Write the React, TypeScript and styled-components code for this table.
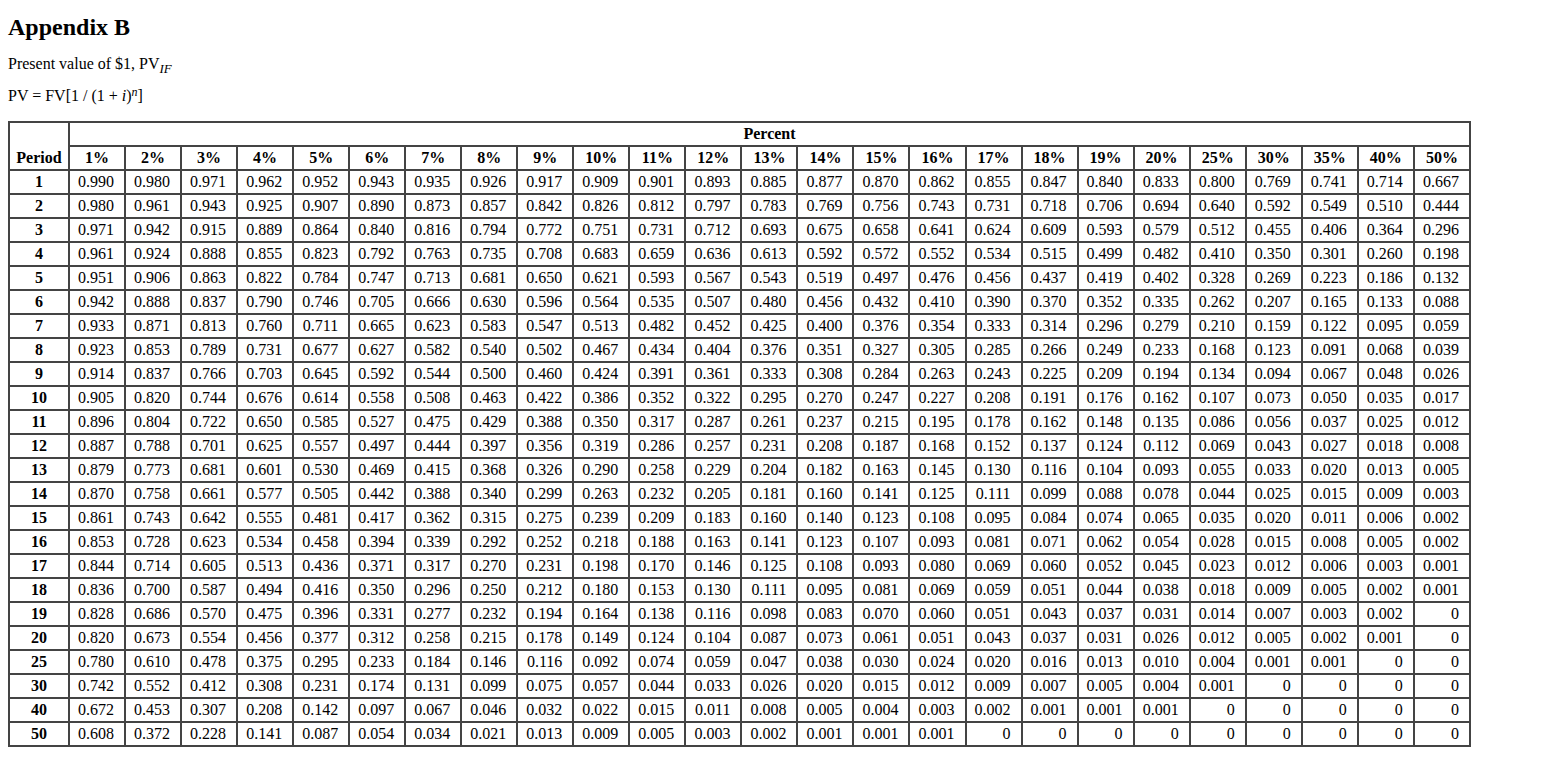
import styled, { createGlobalStyle } from 'styled-components';

const GlobalStyle = createGlobalStyle`
  html, body {
    margin: 0;
    padding: 0;
    background: #fff;
  }

  body {
    font-family: "Liberation Serif", "Times New Roman", serif;
    color: #000;
  }
`;

const Page = styled.main`
  padding: 8px;
`;

const Title = styled.h2`
  margin: 5px 0 0;
  font-size: 24px;
  line-height: 28px;
  font-weight: bold;
`;

const Line = styled.p`
  margin: 14px 0 0;
  font-size: 16px;
  line-height: 18px;
`;

const Sub = styled.sub`
  font-style: italic;
  font-size: 13px;
  line-height: 0;
  vertical-align: -4px;
`;

const Sup = styled.sup`
  font-style: italic;
  font-size: 12px;
  line-height: 0;
  vertical-align: 5px;
`;

const Table = styled.table`
  margin-top: 16px;
  width: 1463px;
  table-layout: fixed;
  border-collapse: separate;
  border-spacing: 0;
  border: 1px solid #444;
  font-size: 16px;
  line-height: 20px;

  th,
  td {
    border: 1px solid #444;
    padding: 1px 10px 1px 4px;
  }

  th {
    font-weight: bold;
    text-align: center;
    padding: 1px 2px;
  }

  td {
    text-align: right;
  }
`;

const PeriodHead = styled.th`
  width: 60px;
  vertical-align: bottom;
  box-sizing: border-box;
`;

const PeriodCell = styled.td`
  && {
    font-weight: bold;
    text-align: center;
    padding: 1px 2px;
  }
`;

const rates = [
  '1%', '2%', '3%', '4%', '5%', '6%', '7%', '8%', '9%', '10%',
  '11%', '12%', '13%', '14%', '15%', '16%', '17%', '18%', '19%', '20%',
  '25%', '30%', '35%', '40%', '50%'
];

// Present value factors, one row per period
const rows: [string, string][] = [
  ['1', '0.990 0.980 0.971 0.962 0.952 0.943 0.935 0.926 0.917 0.909 0.901 0.893 0.885 0.877 0.870 0.862 0.855 0.847 0.840 0.833 0.800 0.769 0.741 0.714 0.667'],
  ['2', '0.980 0.961 0.943 0.925 0.907 0.890 0.873 0.857 0.842 0.826 0.812 0.797 0.783 0.769 0.756 0.743 0.731 0.718 0.706 0.694 0.640 0.592 0.549 0.510 0.444'],
  ['3', '0.971 0.942 0.915 0.889 0.864 0.840 0.816 0.794 0.772 0.751 0.731 0.712 0.693 0.675 0.658 0.641 0.624 0.609 0.593 0.579 0.512 0.455 0.406 0.364 0.296'],
  ['4', '0.961 0.924 0.888 0.855 0.823 0.792 0.763 0.735 0.708 0.683 0.659 0.636 0.613 0.592 0.572 0.552 0.534 0.515 0.499 0.482 0.410 0.350 0.301 0.260 0.198'],
  ['5', '0.951 0.906 0.863 0.822 0.784 0.747 0.713 0.681 0.650 0.621 0.593 0.567 0.543 0.519 0.497 0.476 0.456 0.437 0.419 0.402 0.328 0.269 0.223 0.186 0.132'],
  ['6', '0.942 0.888 0.837 0.790 0.746 0.705 0.666 0.630 0.596 0.564 0.535 0.507 0.480 0.456 0.432 0.410 0.390 0.370 0.352 0.335 0.262 0.207 0.165 0.133 0.088'],
  ['7', '0.933 0.871 0.813 0.760 0.711 0.665 0.623 0.583 0.547 0.513 0.482 0.452 0.425 0.400 0.376 0.354 0.333 0.314 0.296 0.279 0.210 0.159 0.122 0.095 0.059'],
  ['8', '0.923 0.853 0.789 0.731 0.677 0.627 0.582 0.540 0.502 0.467 0.434 0.404 0.376 0.351 0.327 0.305 0.285 0.266 0.249 0.233 0.168 0.123 0.091 0.068 0.039'],
  ['9', '0.914 0.837 0.766 0.703 0.645 0.592 0.544 0.500 0.460 0.424 0.391 0.361 0.333 0.308 0.284 0.263 0.243 0.225 0.209 0.194 0.134 0.094 0.067 0.048 0.026'],
  ['10', '0.905 0.820 0.744 0.676 0.614 0.558 0.508 0.463 0.422 0.386 0.352 0.322 0.295 0.270 0.247 0.227 0.208 0.191 0.176 0.162 0.107 0.073 0.050 0.035 0.017'],
  ['11', '0.896 0.804 0.722 0.650 0.585 0.527 0.475 0.429 0.388 0.350 0.317 0.287 0.261 0.237 0.215 0.195 0.178 0.162 0.148 0.135 0.086 0.056 0.037 0.025 0.012'],
  ['12', '0.887 0.788 0.701 0.625 0.557 0.497 0.444 0.397 0.356 0.319 0.286 0.257 0.231 0.208 0.187 0.168 0.152 0.137 0.124 0.112 0.069 0.043 0.027 0.018 0.008'],
  ['13', '0.879 0.773 0.681 0.601 0.530 0.469 0.415 0.368 0.326 0.290 0.258 0.229 0.204 0.182 0.163 0.145 0.130 0.116 0.104 0.093 0.055 0.033 0.020 0.013 0.005'],
  ['14', '0.870 0.758 0.661 0.577 0.505 0.442 0.388 0.340 0.299 0.263 0.232 0.205 0.181 0.160 0.141 0.125 0.111 0.099 0.088 0.078 0.044 0.025 0.015 0.009 0.003'],
  ['15', '0.861 0.743 0.642 0.555 0.481 0.417 0.362 0.315 0.275 0.239 0.209 0.183 0.160 0.140 0.123 0.108 0.095 0.084 0.074 0.065 0.035 0.020 0.011 0.006 0.002'],
  ['16', '0.853 0.728 0.623 0.534 0.458 0.394 0.339 0.292 0.252 0.218 0.188 0.163 0.141 0.123 0.107 0.093 0.081 0.071 0.062 0.054 0.028 0.015 0.008 0.005 0.002'],
  ['17', '0.844 0.714 0.605 0.513 0.436 0.371 0.317 0.270 0.231 0.198 0.170 0.146 0.125 0.108 0.093 0.080 0.069 0.060 0.052 0.045 0.023 0.012 0.006 0.003 0.001'],
  ['18', '0.836 0.700 0.587 0.494 0.416 0.350 0.296 0.250 0.212 0.180 0.153 0.130 0.111 0.095 0.081 0.069 0.059 0.051 0.044 0.038 0.018 0.009 0.005 0.002 0.001'],
  ['19', '0.828 0.686 0.570 0.475 0.396 0.331 0.277 0.232 0.194 0.164 0.138 0.116 0.098 0.083 0.070 0.060 0.051 0.043 0.037 0.031 0.014 0.007 0.003 0.002 0'],
  ['20', '0.820 0.673 0.554 0.456 0.377 0.312 0.258 0.215 0.178 0.149 0.124 0.104 0.087 0.073 0.061 0.051 0.043 0.037 0.031 0.026 0.012 0.005 0.002 0.001 0'],
  ['25', '0.780 0.610 0.478 0.375 0.295 0.233 0.184 0.146 0.116 0.092 0.074 0.059 0.047 0.038 0.030 0.024 0.020 0.016 0.013 0.010 0.004 0.001 0.001 0 0'],
  ['30', '0.742 0.552 0.412 0.308 0.231 0.174 0.131 0.099 0.075 0.057 0.044 0.033 0.026 0.020 0.015 0.012 0.009 0.007 0.005 0.004 0.001 0 0 0 0'],
  ['40', '0.672 0.453 0.307 0.208 0.142 0.097 0.067 0.046 0.032 0.022 0.015 0.011 0.008 0.005 0.004 0.003 0.002 0.001 0.001 0.001 0 0 0 0 0'],
  ['50', '0.608 0.372 0.228 0.141 0.087 0.054 0.034 0.021 0.013 0.009 0.005 0.003 0.002 0.001 0.001 0.001 0 0 0 0 0 0 0 0 0']
];

const App = () => (
  <Page>
    <GlobalStyle />
    <Title>Appendix B</Title>
    <Line>
      Present value of $1, PV<Sub>IF</Sub>
    </Line>
    <Line>
      PV = FV[1 / (1 + <i>i</i>)<Sup>n</Sup>]
    </Line>

    <Table>
      <thead>
        <tr>
          <PeriodHead rowSpan={2}>Period</PeriodHead>
          <th colSpan={rates.length}>Percent</th>
        </tr>
        <tr>
          {rates.map((rate) => (
            <th key={rate}>{rate}</th>
          ))}
        </tr>
      </thead>
      <tbody>
        {rows.map(([period, values]) => (
          <tr key={period}>
            <PeriodCell>{period}</PeriodCell>
            {values.split(' ').map((value, i) => (
              <td key={period + '_' + i}>{value}</td>
            ))}
          </tr>
        ))}
      </tbody>
    </Table>
  </Page>
);

export default App;
